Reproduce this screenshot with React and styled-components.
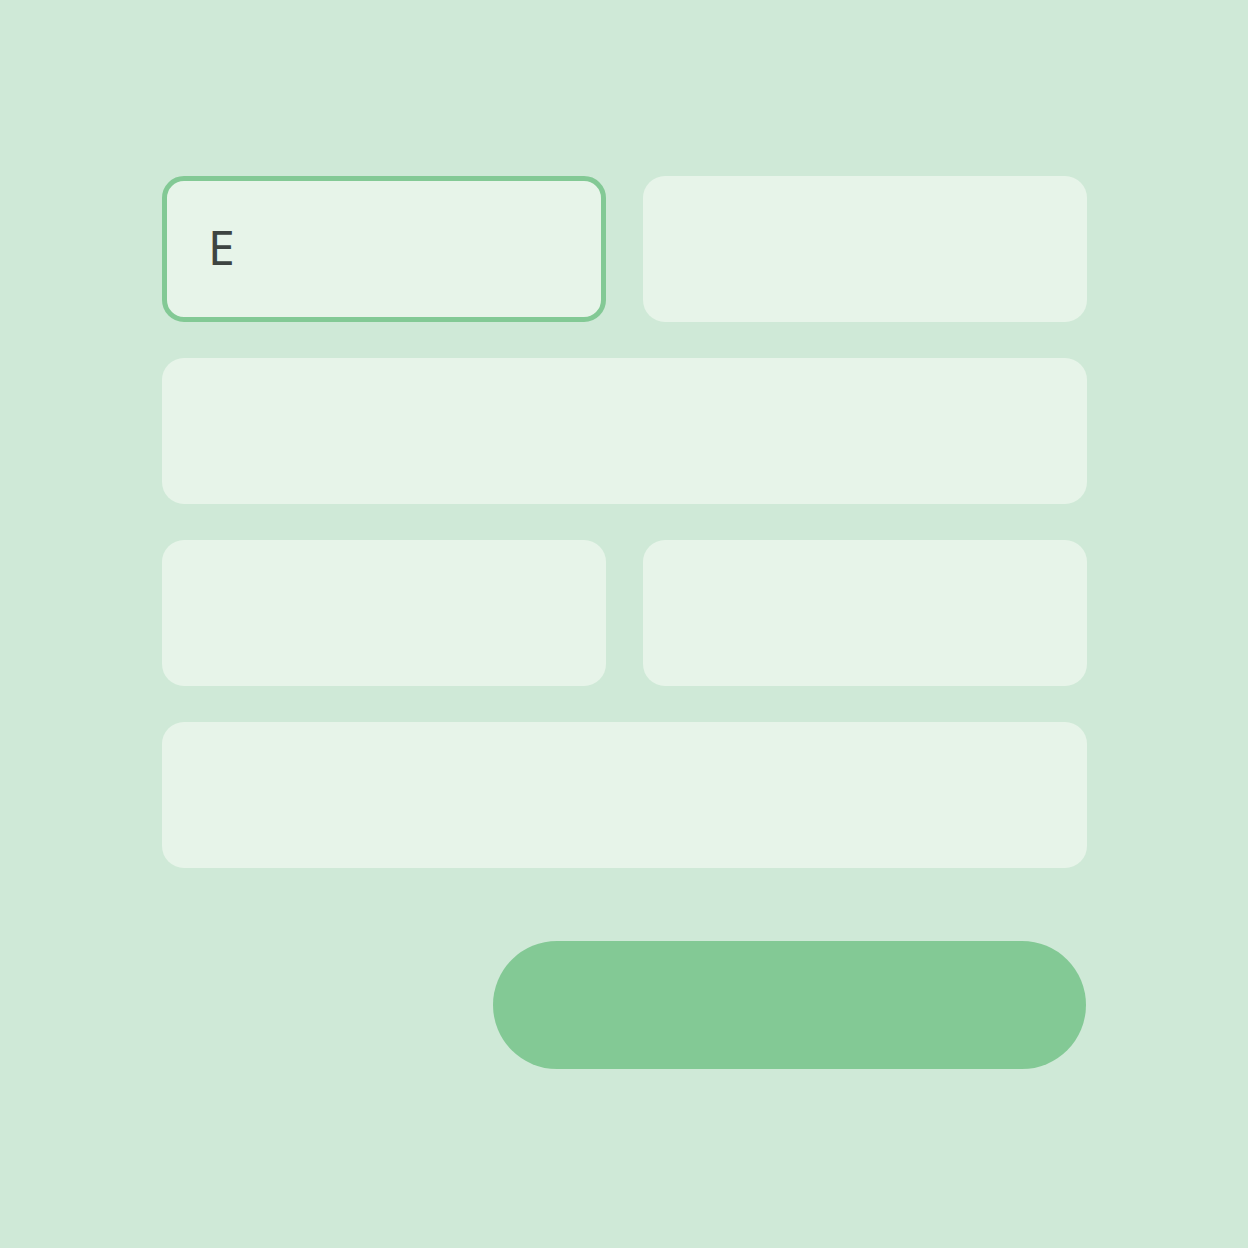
import React from 'react'
import styled, { createGlobalStyle } from 'styled-components'

const Global = createGlobalStyle`
  html, body {
    margin: 0;
    padding: 0;
    background: #cfe9d7;
    font-family: "Noto Sans", "Open Sans", sans-serif;
  }
`

const Page = styled.div`
  width: 1248px;
  height: 1248px;
  box-sizing: border-box;
  padding: 176px 0 0 162px;
  background: #cfe9d7;
`

const Form = styled.form`
  width: 925px;
  display: flex;
  flex-direction: column;
  gap: 73px;
`

const Fields = styled.div`
  display: grid;
  grid-template-columns: 444px 444px;
  column-gap: 37px;
  row-gap: 36px;
`

const Field = styled.input`
  grid-column: ${p => (p.$wide ? '1 / span 2' : 'auto')};
  width: 100%;
  height: 146px;
  box-sizing: border-box;
  margin: 0;
  padding: 0 0 ${p => (p.$focused ? '6px' : '0')} ${p => (p.$focused ? '41px' : '47px')};
  border: ${p => (p.$focused ? '5px solid #83c995' : 'none')};
  border-radius: 22px;
  background: #e7f4e9;
  color: #3d4441;
  font-family: "Noto Sans", "Open Sans", sans-serif;
  font-size: 48px;
  outline: none;
`

const Submit = styled.button`
  align-self: flex-end;
  width: 593px;
  height: 128px;
  margin-right: 1px;
  border: none;
  border-radius: 64px;
  background: #83c995;
`

const App = () => {
  return (
    <Page>
      <Global />
      <Form onSubmit={e => e.preventDefault()}>
        <Fields>
          <Field $focused defaultValue="E" />
          <Field />
          <Field $wide />
          <Field />
          <Field />
          <Field $wide />
        </Fields>
        <Submit type="submit" />
      </Form>
    </Page>
  )
}

export default App
